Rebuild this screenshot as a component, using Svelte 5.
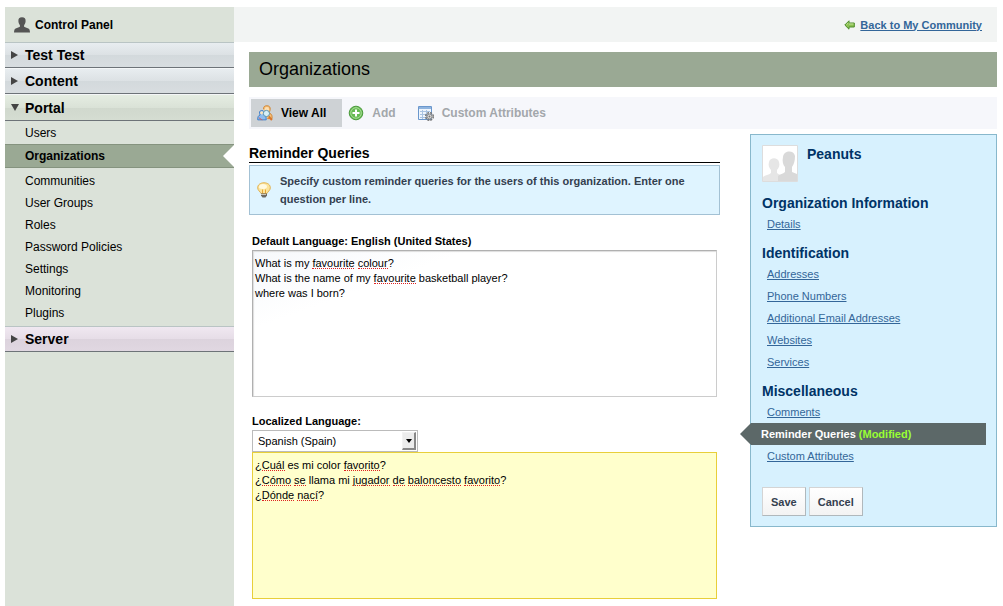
<script>
    const menuItems = ['Users', 'Organizations', 'Communities', 'User Groups', 'Roles', 'Password Policies', 'Settings', 'Monitoring', 'Plugins']

    const sections = [
        { title: 'Organization Information', links: ['Details'] },
        { title: 'Identification', links: ['Addresses', 'Phone Numbers', 'Additional Email Addresses', 'Websites', 'Services'] },
        { title: 'Miscellaneous', links: ['Comments', 'Reminder Queries', 'Custom Attributes'] }
    ]

    const unknownWords = ['favourite', 'colour', 'Cuál', 'favorito', 'Cómo', 'se', 'jugador', 'de', 'baloncesto', 'Dónde', 'nací']

    const lineHeight = 15
    const ruler = document.createElement('canvas').getContext('2d')
    ruler.font = '11px "Liberation Sans", Arial, sans-serif'

    let activeItem = $state('Organizations')
    let activeLink = $state('Reminder Queries')
    let language = $state('es')
    let defaultQueries = $state('What is my favourite colour?\nWhat is the name of my favourite basketball player?\nwhere was I born?')
    let localQueries = $state('¿Cuál es mi color favorito?\n¿Cómo se llama mi jugador de baloncesto favorito?\n¿Dónde nací?')

    // where the spelling marks go, measured from the start of the text
    function marks(text) {
        let found = []
        text.split('\n').forEach((line, row) => {
            for (const match of line.matchAll(/\p{L}+/gu)) {
                if (unknownWords.includes(match[0])) {
                    found.push({
                        left: Math.round(ruler.measureText(line.slice(0, match.index)).width),
                        top: row * lineHeight,
                        width: Math.round(ruler.measureText(match[0]).width)
                    })
                }
            }
        })
        return found
    }

    function pick(event, name) {
        event.preventDefault()
        activeLink = name
    }
</script>

{#snippet queryBox(id, text, oninput, localized)}
    <div class="query-box" class:localized>
        <textarea {id} value={text} {oninput} spellcheck="false"></textarea>
        <div class="marks">
            {#each marks(text) as mark}
                <i style="left: {mark.left}px; top: {mark.top}px; width: {mark.width}px"></i>
            {/each}
        </div>
    </div>
{/snippet}

<div class="page">
    <nav class="sidebar">
        <div class="panel-name">
            <svg width="16" height="16" viewBox="0 0 16 16" aria-hidden="true">
                <path fill="#555" d="M8 .3c2.700 0 3.800 1.600 3.600 3.900-.1 1.700-.8 3-1.500 3.900v1.700c1.200.8 3.500 1 4.700 2 .8.700 1.100 1.900 1.200 3.700H0c.1-1.800.4-3 1.200-3.700 1.200-1 3.500-1.200 4.700-2V8.100C5.200 7.200 4.500 5.900 4.400 4.200 4.200 1.900 5.300.3 8 .3z" />
            </svg>
            Control Panel
        </div>
        <button class="group"><span class="closed"></span>Test Test</button>
        <button class="group content"><span class="closed"></span>Content</button>
        <button class="group portal"><span class="opened"></span>Portal</button>
        <ul class="menu">
            {#each menuItems as item}
                <li class:active={item === activeItem}>
                    <a href="#{item}" onclick={() => activeItem = item}>{item}</a>
                </li>
            {/each}
        </ul>
        <button class="group server"><span class="closed"></span>Server</button>
    </nav>

    <div class="main">
        <header>
            <svg width="11" height="10" viewBox="0 0 11 10" aria-hidden="true">
                <path fill="#8cc152" stroke="#4d8b2b" d="M5 .8.8 5 5 9.200V7h5.300V3H5z" />
                <path fill="none" stroke="#c3e39a" d="M2.500 4.700 4.300 3M5 4h4.500" />
            </svg>
            <a href="#community">Back to My Community</a>
        </header>

        <div class="body">
            <h1>Organizations</h1>

            <div class="toolbar">
                <button class="selected">
                    <svg width="16" height="16" viewBox="0 0 17 17" aria-hidden="true">
                        <path fill="#f6c07a" stroke="#d0822e" d="M9.500 9.500c-.6-1-1-2-3-2.500M7 4.500C6.700 2 8 .8 10.500.8s3.800 1.400 3.500 4c-.2 1.700-.8 2.700-1.500 3.400 1.800.9 3.500 1.700 3.500 4.300v2h-5" />
                        <circle cx="10.500" cy="4.500" r="2.300" fill="#fce0b4" />
                        <path fill="#8ebdf0" stroke="#3c7cc6" d="M.8 15.800c-.2-3 .6-4.800 2.600-5.200C2 8.500 2.500 5.800 5 5.800s3.300 2 2.300 4.400c1.700.8 2.500 2 2.500 5.600z" />
                        <circle cx="5" cy="8.300" r="1.700" fill="#fbe3bd" />
                        <circle cx="10" cy="9" r="3.300" fill="#d7f0f8" stroke="#5990a8" />
                        <path stroke="#d8752c" stroke-width="2" d="m12.500 12 3.300 4" />
                        <path stroke="#e2574c" d="M2 13.500 5.500 16" />
                    </svg>
                    View All
                </button>
                <button>
                    <svg width="16" height="16" viewBox="0 0 16 16" aria-hidden="true">
                        <circle cx="8" cy="8" r="6.800" fill="#67bb53" stroke="#4b9a3c" />
                        <circle cx="8" cy="8" r="5.300" fill="none" stroke="#a9dc98" />
                        <path stroke="#fff" stroke-width="2" d="M8 4.500v7M4.500 8h7" />
                    </svg>
                    Add
                </button>
                <button>
                    <svg width="16" height="16" viewBox="0 0 16 16" aria-hidden="true">
                        <path fill="#eef5fd" stroke="#6a97cd" d="M.5 1.500h13v13H.5z" />
                        <path stroke="#8fb4df" stroke-width="2" d="M1 3h12" />
                        <path stroke="#a9c3e2" fill="none" d="M2 6.500h10M2 9.500h10M2 12.500h10M4.500 5v9M8.500 5v9" />
                        <circle cx="11.500" cy="11.500" r="3.800" fill="none" stroke="#777" stroke-width="1.500" stroke-dasharray="2 1" />
                        <circle cx="11.500" cy="11.500" r="2.500" fill="#ddd" stroke="#888" />
                        <circle cx="11.500" cy="11.500" r="1" fill="#777" />
                    </svg>
                    Custom Attributes
                </button>
            </div>

            <div class="columns">
                <form class="form">
                    <h2>Reminder Queries</h2>
                    <p class="info">
                        <svg width="16" height="16" viewBox="0 0 16 16" aria-hidden="true">
                            <path fill="#fce49b" stroke="#e0b04f" d="M8 .8c3.700 0 6.300 2 6.300 5 0 2.700-2.600 3.700-3.300 5.700H5C4.300 9.500 1.700 8.500 1.700 5.800c0-3 2.600-5 6.300-5z" />
                            <path fill="#fff9e0" d="M7 2c2 0 4 1 4 2.700S9 7 6.500 7 3 6 3 4.700 5 2 7 2z" />
                            <path stroke="#e5a736" fill="none" d="M6.500 7.500v4M9.500 7.500v4" />
                            <path fill="#6d6a62" d="M5 11.500h6v2L9.500 15.500h-3L5 13.500z" />
                            <path stroke="#c9c6bd" d="M5 12.500h5" />
                        </svg>
                        <span>Specify custom reminder queries for the users of this organization. Enter one question per line.</span>
                    </p>

                    <div class="field">
                        <label for="default-queries">Default Language: English (United States)</label>
                        {@render queryBox('default-queries', defaultQueries, (e) => defaultQueries = e.target.value, false)}
                    </div>

                    <div class="field">
                        <label for="language">Localized Language:</label>
                        <div class="select">
                            <select id="language" bind:value={language}>
                                <option value="es">Spanish (Spain)</option>
                                <option value="fr">French (France)</option>
                                <option value="de">German (Germany)</option>
                            </select>
                            <span class="arrow"></span>
                        </div>
                        {@render queryBox('local-queries', localQueries, (e) => localQueries = e.target.value, true)}
                    </div>
                </form>

                <aside>
                    <div class="organization">
                        <svg width="36" height="37" viewBox="0 0 36 37" aria-hidden="true">
                            <path fill="#fff" stroke="#ddd" d="M.5.500h35v36H.5z" />
                            <path fill="#e6e6e6" d="M1 36v-4c2-2 6-2 8-4v-3c-2-2-3-5-2-8 1-5 9-5 10 0 1 3 0 6-2 8v3c2 2 5 2 6 4v4z" />
                            <path fill="#d9d9d9" d="M16 36v-5c2-2 5-2 7-4v-5c-2-2-3-6-2-10 1-7 11-7 12-1 0 5-1 8-3 11v5l5 2v7z" />
                        </svg>
                        <h3>Peanuts</h3>
                    </div>

                    {#each sections as section}
                        <h3>{section.title}</h3>
                        <ul>
                            {#each section.links as link}
                                <li class:current={link === activeLink}>
                                    <a href="#{link}" onclick={(e) => pick(e, link)}>{link}</a>
                                    {#if link === activeLink}<span class="modified">(Modified)</span>{/if}
                                </li>
                            {/each}
                        </ul>
                    {/each}

                    <div class="buttons">
                        <button>Save</button>
                        <button>Cancel</button>
                    </div>
                </aside>
            </div>
        </div>
    </div>
</div>

<style>
:global(body) {
    margin: 0;
    background: #fff;
}

.page {
    display: flex;
    box-sizing: border-box;
    min-height: 100vh;
    padding: 7px 6px 0 5px;
    font-family: "Liberation Sans", Arial, sans-serif;
    font-size: 11px;
    color: #000;
}

button, select, textarea {
    font-family: inherit;
    font-size: inherit;
    color: inherit;
}

ul {
    list-style: none;
    margin: 0;
    padding: 0;
}

h1, h2, h3, p {
    margin: 0;
}

svg {
    flex: none;
}

/* left menu */

.sidebar {
    flex: none;
    width: 229px;
    background: #dbe2d9;
}

.panel-name {
    display: flex;
    align-items: center;
    gap: 5px;
    height: 35px;
    padding-left: 9px;
    font-size: 12px;
    font-weight: bold;
}

.group {
    display: flex;
    align-items: center;
    width: 100%;
    height: 26px;
    padding: 0 0 0 6px;
    border: 0;
    border-top: 1px solid #b9c4c4;
    border-bottom: 1px solid #6d7378;
    background: linear-gradient(#e8edf0, #dce1e4 50%, #d3d9dc 50%, #d8dde0);
    font-size: 14px;
    font-weight: bold;
    text-align: left;
}

.group.content {
    border-top-color: #f4f6f7;
}

.group.portal {
    height: 27px;
    border-top-color: #f4f6f7;
    background: linear-gradient(#e5ede2, #dae2d7 50%, #d0d8cd 50%, #d5ddd2);
}

.group.server {
    background: linear-gradient(#f0e8f1, #e6dde7 50%, #dcd3dd 50%, #e0d7e1);
}

.closed {
    margin-right: 7px;
    border: 4px solid transparent;
    border-left: 7px solid #444;
    border-right: 0;
}

.opened {
    margin-right: 6px;
    border: 4px solid transparent;
    border-top: 7px solid #444;
    border-bottom: 0;
}

.menu {
    padding: 1px 0 2px;
    font-size: 12px;
}

.menu a {
    display: block;
    padding-left: 20px;
    line-height: 22px;
    color: inherit;
    text-decoration: none;
}

.menu .active {
    position: relative;
    margin-bottom: 2px;
    border-top: 1px solid #85937f;
    border-bottom: 1px solid #85937f;
    background: #9aa994;
    font-weight: bold;
}

.menu .active::after {
    content: "";
    position: absolute;
    right: 0;
    top: 0;
    border: 11px solid transparent;
    border-right-color: #fff;
    border-left: 0;
}

/* right part */

.main {
    flex: 1;
    min-width: 0;
}

header {
    display: flex;
    align-items: center;
    justify-content: flex-end;
    gap: 5px;
    height: 35px;
    padding-right: 15px;
    background: #f2f4f3;
    font-weight: bold;
}

header a {
    color: #336699;
}

.body {
    padding: 10px 0 6px 15px;
}

h1 {
    padding-left: 10px;
    background: #9aa994;
    font-size: 18px;
    font-weight: normal;
    line-height: 35px;
}

.toolbar {
    display: flex;
    margin-top: 10px;
    padding: 2px;
    background: #f6f7fb;
}

.toolbar button {
    display: flex;
    align-items: center;
    gap: 8px;
    height: 28px;
    padding: 0 16px 0 6px;
    border: 0;
    background: none;
    color: #a3a7ab;
    font-size: 12px;
    font-weight: bold;
}

.toolbar .selected {
    background: #ced2d5;
    color: #000;
}

.columns {
    display: flex;
    align-items: flex-start;
    gap: 30px;
    padding-top: 5px;
}

.form {
    flex: 1;
    min-width: 0;
}

h2 {
    margin-top: 10px;
    border-bottom: 1px solid #000;
    font-size: 14px;
    line-height: 18px;
}

.info {
    display: flex;
    align-items: center;
    gap: 8px;
    margin-top: 2px;
    padding: 6px 25px 6px 6px;
    border: 1px solid #a3c1d4;
    background: #dff4ff;
    color: #34404f;
    font-weight: bold;
    line-height: 18px;
}

.field {
    margin-bottom: 15px;
    padding: 0 3px;
}

.info + .field {
    margin-top: 17px;
}

.field:last-child {
    margin-bottom: 0;
}

label {
    display: block;
    font-weight: bold;
    line-height: 18px;
}

.query-box {
    position: relative;
    height: 145px;
    border: 1px solid #ccc;
    border-top-color: #b0b0b0;
    border-left-color: #b0b0b0;
    background: linear-gradient(160deg, #f6f8fb, #fff 25%);
    box-shadow: inset 1px 1px 1px #ddd;
}

.localized {
    border-color: #e8cf3a;
    background: #ffffcc;
    box-shadow: none;
}

textarea {
    display: block;
    box-sizing: border-box;
    width: 100%;
    height: 100%;
    margin: 0;
    padding: 5px 2px;
    border: 0;
    background: none;
    line-height: 15px;
    resize: none;
    outline: none;
}

/* spelling marks, drawn over the textarea */
.marks {
    position: absolute;
    top: 5px;
    left: 2px;
    pointer-events: none;
}

.marks i {
    position: absolute;
    height: 12px;
    border-bottom: 1px dotted #d22;
}

.select {
    position: relative;
    width: 166px;
}

select {
    display: block;
    width: 100%;
    height: 22px;
    padding: 0 5px;
    appearance: none;
    border: 1px solid #bbb;
    border-radius: 0;
    background: #fff;
}

.arrow {
    position: absolute;
    top: 2px;
    right: 2px;
    display: flex;
    align-items: center;
    justify-content: center;
    width: 11px;
    height: 15px;
    border: 1px solid #f2f2f2;
    border-right: 2px solid #888;
    border-bottom: 2px solid #888;
    background: #ececec;
    pointer-events: none;
}

.arrow::after {
    content: "";
    border: 3px solid transparent;
    border-top: 4px solid #000;
    border-bottom: 0;
}

/* organization box */

aside {
    flex: none;
    box-sizing: border-box;
    width: 247px;
    padding: 10px 10px 10px 11px;
    border: 1px solid #88b8cc;
    background: #d7f1fe;
}

.organization {
    display: flex;
    gap: 9px;
    margin-bottom: 12px;
}

h3 {
    color: #003366;
    font-size: 14px;
    line-height: 19px;
}

aside ul {
    margin-bottom: 9px;
}

aside li {
    padding-left: 5px;
    line-height: 22px;
}

aside li a {
    color: #336699;
}

aside .current {
    position: relative;
    margin-left: -11px;
    padding-left: 10px;
    background: #5c6868;
    color: #fff;
    font-weight: bold;
}

aside .current::before {
    content: "";
    position: absolute;
    top: 0;
    right: 100%;
    border: 11px solid transparent;
    border-right-color: #5c6868;
    border-left: 0;
}

aside .current a {
    color: #fff;
    text-decoration: none;
}

.modified {
    color: #99ff33;
}

.buttons {
    display: flex;
    gap: 3px;
    margin-top: 20px;
}

.buttons button {
    height: 29px;
    padding: 0 8px;
    border: 1px solid #d4d4d4;
    border-right-color: #b0b8bc;
    border-bottom-color: #b0b8bc;
    background: linear-gradient(#fff, #f3f3f3);
    color: #34404f;
    font-weight: bold;
}
</style>
